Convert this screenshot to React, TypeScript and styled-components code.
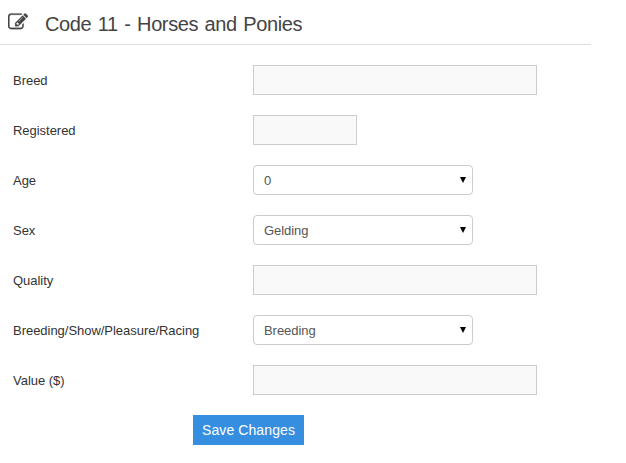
import React from "react";
import styled, { createGlobalStyle } from "styled-components";

const GlobalStyle = createGlobalStyle`
  * { box-sizing: border-box; }
  body { margin: 0; background: #fff; font-family: "Liberation Sans", Arial, sans-serif; overflow: hidden; }
`;
const Page = styled.main`
  width: 626px;
  height: 463px;
`;
const Header = styled.header`
  display: flex;
  width: 591px;
  height: 45px;
  padding: 12px 0 0 8px;
  border-bottom: 1px solid #ddd;
`;
const EditIcon = styled.svg`
  width: 20px;
  height: 18px;
  margin-top: 1px;
  flex: none;
`;
const Title = styled.h1`
  margin: 0 0 0 17px;
  font: 400 20px/24px "Liberation Sans", Arial, sans-serif;
  letter-spacing: -0.4px;
  word-spacing: 1.4px;
  color: #444;
  white-space: nowrap;
`;
const Form = styled.form`
  display: flex;
  flex-direction: column;
  gap: 20px;
  padding: 20px 0 0 13px;
`;
const Row = styled.div`
  display: grid;
  grid-template-columns: 240px 1fr;
  align-items: center;
  height: 30px;
`;
const Label = styled.label`
  padding-top: 2px;
  font-size: 13px;
  line-height: 20px;
  letter-spacing: -0.03px;
  color: #333;
  white-space: nowrap;
`;
const Input = styled.input<{ $width: number }>`
  width: ${(p) => p.$width}px;
  height: 30px;
  border: 1px solid #ccc;
  border-radius: 0;
  background: #f9f9f9;
  padding: 4px 6px;
`;
const Select = styled.div`
  display: flex;
  align-items: center;
  justify-content: space-between;
  width: 220px;
  height: 30px;
  padding: 0 6px 0 10px;
  border: 1px solid #ccc;
  border-radius: 4px;
  font-size: 13px;
  letter-spacing: -0.06px;
  color: #555;
`;
const Arrow = styled.svg`
  width: 6px;
  height: 6px;
`;
const Save = styled.button`
  width: 111px;
  height: 30px;
  margin-left: 180px;
  padding: 0;
  border: 0;
  background: #368ee0;
  color: #fff;
  font: 14px/20px "Liberation Sans", Arial, sans-serif;
  letter-spacing: 0.1px;
`;

type Field = { label: string; width?: number; value?: string };
const fields: Field[] = [
  { label: "Breed", width: 284 },
  { label: "Registered", width: 104 },
  { label: "Age", value: "0" },
  { label: "Sex", value: "Gelding" },
  { label: "Quality", width: 284 },
  { label: "Breeding/Show/Pleasure/Racing", value: "Breeding" },
  { label: "Value ($)", width: 284 },
];

export default function App() {
  return (
    <Page>
      <GlobalStyle />
      <Header>
        <EditIcon viewBox="0 0 1792 1536" fill="#444" stroke="#444" strokeWidth="24">
          <path d="M888 1056l116-116-152-152-116 116v56h96v96h56zm440-720q-16-16-33 1L945 687q-17 17-1 33t33-1l350-350q17-17 1-33zm80 594v190q0 119-84.500 203.500T1120 1408H288q-119 0-203.500-84.500T0 1120V288Q0 169 84.500 84.500T288 0h832q63 0 117 25 15 7 18 23 3 17-9 29l-49 49q-14 14-32 8-23-6-45-6H288q-66 0-113 47t-47 113v832q0 66 47 113t113 47h832q66 0 113-47t47-113V994q0-13 9-22l64-64q15-15 35-7t20 29zM1312 192l288 288-672 672H640V864zm444 132l-92 92-288-288 92-92q28-28 68-28t68 28l152 152q28 28 28 68t-28 68z" />
        </EditIcon>
        <Title>Code 11 - Horses and Ponies</Title>
      </Header>
      <Form onSubmit={(e) => e.preventDefault()}>
        {fields.map((f) => (
          <Row key={f.label}>
            <Label>{f.label}</Label>
            {f.width ? (
              <Input $width={f.width} aria-label={f.label} />
            ) : (
              <Select role="combobox" aria-label={f.label}>
                {f.value}
                <Arrow viewBox="0 0 6 6">
                  <path d="M0 0h6L3 6z" fill="#000" />
                </Arrow>
              </Select>
            )}
          </Row>
        ))}
        <Save type="submit">Save Changes</Save>
      </Form>
    </Page>
  );
}
